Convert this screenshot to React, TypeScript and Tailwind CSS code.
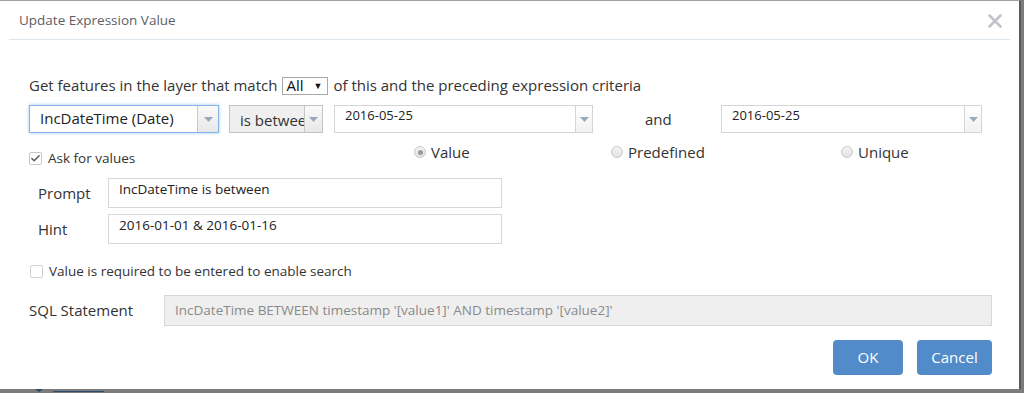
import { Check } from "lucide-react";

const font = { fontFamily: "'Open Sans', Lato, sans-serif" };

function Arrow({ className = "" }: { className?: string }) {
    return (
        <div className={`flex items-center justify-center border-l border-[#c8c8c8] bg-gradient-to-b from-[#fafafa] to-[#e8e8e8] ${className}`}>
            <svg width="9" height="5" viewBox="0 0 9 5">
                <path d="M0 0h9L4.5 5z" fill="#9aa9bd" />
            </svg>
        </div>
    );
}

function Radio({ label, checked }: { label: string; checked?: boolean }) {
    return (
        <div className="flex items-center gap-[5px]">
            <span className="flex h-[12px] w-[12px] items-center justify-center rounded-full border border-[#c9c9c9] bg-gradient-to-b from-[#f4f4f4] to-[#e2e2e2]">
                {checked && <span className="h-[5px] w-[5px] rounded-full bg-[#9a9a9a]" />}
            </span>
            <span>{label}</span>
        </div>
    );
}

export default function App() {
    return (
        <div className="relative h-[393px] w-[1024px] overflow-hidden bg-[#7b7b7b]" style={font}>
            {/* page behind the dialog */}
            <div className="absolute bottom-[1px] left-[35px] h-0 w-0 border-x-[4px] border-t-[3px] border-x-transparent border-t-[#2c4a6e]" />
            <div className="absolute bottom-[1px] left-[53px] h-[1px] w-[51px] bg-[#2c4a6e]" />

            <div className="h-[389px] w-[1021px] border-t border-[#a0a0a0] border-r-2 border-r-[#5a5a5a] bg-white text-[15px] text-[#333]">
                {/* header */}
                <div className="mx-[9px] flex h-[39px] items-center justify-between border-b border-[#dde6ee] pl-[10px] pr-[8px]">
                    <span className="text-[13.5px] text-[#5e5e66]">Update Expression Value</span>
                    <svg width="14" height="14" viewBox="0 0 14 14" className="mt-[2px]">
                        <path d="M1.5 1.5l11 11M12.5 1.5l-11 11" stroke="#bfc3c8" strokeWidth="2.6" strokeLinecap="round" />
                    </svg>
                </div>

                <div className="pl-[29px] pr-[27px]">
                    {/* match line */}
                    <div className="mt-[36px] flex h-[19px] items-center">
                        <span>Get features in the layer that match</span>
                        <span className="ml-[5px] flex h-[18px] w-[46px] items-center justify-between border border-[#a8a8a8] pl-[3px] pr-[5px] text-[#111]">
                            All <span className="text-[9px]">▼</span>
                        </span>
                        <span className="ml-[5px]">of this and the preceding expression criteria</span>
                    </div>

                    {/* expression row */}
                    <div className="mt-[10px] flex h-[28px] items-stretch">
                        <div className="flex w-[190px] border border-[#84b4e8] shadow-[0_0_3px_#9cc6f2]">
                            <span className="flex-1 pl-[10px] pt-[1px] text-[#222]">IncDateTime (Date)</span>
                            <Arrow className="w-[21px] border-l-[#b6cde6]" />
                        </div>
                        <div className="ml-[10px] flex w-[94px] border border-[#c3c3c3] bg-[#efefef]">
                            <span className="w-[74px] overflow-hidden whitespace-nowrap pl-[10px] pt-[3px]">is between</span>
                            <Arrow className="w-[18px]" />
                        </div>
                        <div className="ml-[11px] flex w-[259px] border border-[#d4d4d4]">
                            <span className="flex-1 pl-[10px] text-[13px] text-[#222]">2016-05-25</span>
                            <Arrow className="w-[17px] border-l-[#d4d4d4] from-white to-[#f2f2f2]" />
                        </div>
                        <span className="ml-[52px] w-[76px] self-center pt-[1px]">and</span>
                        <div className="flex w-[261px] border border-[#d4d4d4]">
                            <span className="flex-1 pl-[10px] text-[13px] text-[#222]">2016-05-25</span>
                            <Arrow className="w-[17px] border-l-[#d4d4d4] from-white to-[#f2f2f2]" />
                        </div>
                    </div>

                    {/* ask for values + radios */}
                    <div className="mt-[8px] flex items-start">
                        <div className="mt-[10px] flex h-[15px] w-[385px] items-center">
                            <span className="flex h-[13px] w-[13px] items-center justify-center rounded-[2px] border border-[#c9c9c9] bg-white">
                                <Check className="h-[11px] w-[11px] text-[#555]" strokeWidth={3} />
                            </span>
                            <span className="ml-[6px] text-[13.5px]">Ask for values</span>
                        </div>
                        <div className="flex w-[197px]"><Radio label="Value" checked /></div>
                        <div className="flex w-[230px]"><Radio label="Predefined" /></div>
                        <div className="flex"><Radio label="Unique" /></div>
                    </div>

                    {/* prompt + hint */}
                    <div className="ml-[9px] mt-[12px] flex flex-col gap-[6px]">
                        <div className="flex h-[30px]">
                            <span className="w-[70px] self-center pt-[1px]">Prompt</span>
                            <div className="w-[394px] border border-[#d7d7d7] pl-[10px] text-[13.5px] text-[#222]">IncDateTime is between</div>
                        </div>
                        <div className="flex h-[30px]">
                            <span className="w-[70px] self-center pt-[1px]">Hint</span>
                            <div className="w-[394px] border border-[#d7d7d7] pl-[10px] text-[13.5px] text-[#222]">2016-01-01 &amp; 2016-01-16</div>
                        </div>
                    </div>

                    {/* required */}
                    <div className="ml-[1px] mt-[19px] flex h-[16px] items-center">
                        <span className="h-[13px] w-[13px] rounded-[2px] border border-[#d2d2d2] bg-white" />
                        <span className="ml-[6px] text-[13.5px]">Value is required to be entered to enable search</span>
                    </div>

                    {/* SQL */}
                    <div className="mt-[16px] flex h-[31px] items-stretch">
                        <span className="w-[135px] self-center">SQL Statement</span>
                        <div className="flex flex-1 items-center border border-[#d8d8d8] bg-[#efefef] pl-[10px] text-[13.5px] text-[#8a8a8a]">
                            IncDateTime BETWEEN timestamp '[value1]' AND timestamp '[value2]'
                        </div>
                    </div>

                    {/* buttons */}
                    <div className="mt-[14px] flex justify-end gap-[14px]">
                        <button className="h-[35px] w-[70px] rounded-[4px] bg-[#528bc9] text-white">OK</button>
                        <button className="h-[35px] w-[75px] rounded-[4px] bg-[#528bc9] text-white">Cancel</button>
                    </div>
                </div>
            </div>
        </div>
    );
}
